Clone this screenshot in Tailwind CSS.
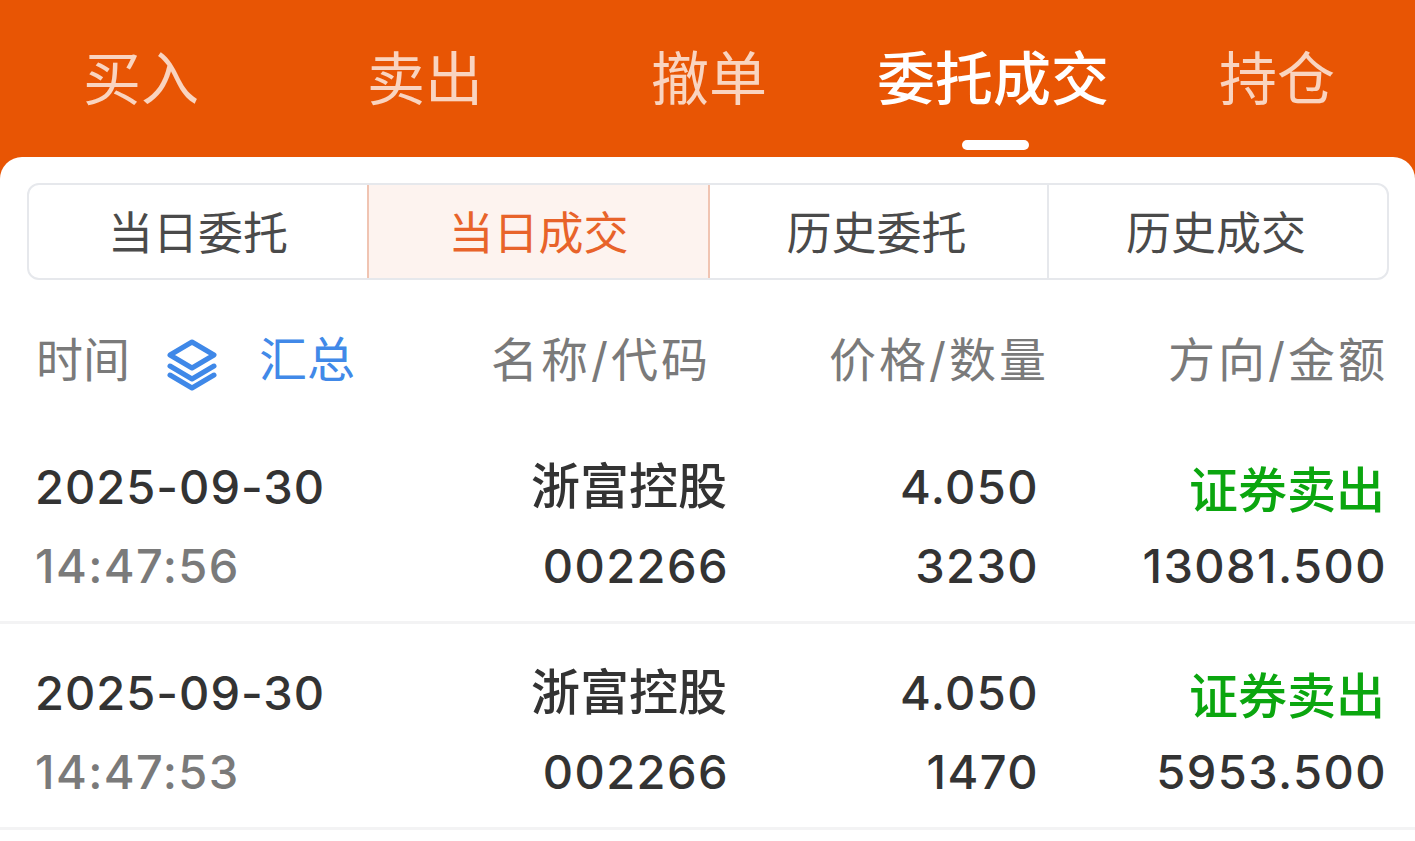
<!DOCTYPE html>
<html lang="zh-CN">
<head>
  <meta charset="UTF-8" />
  <title>委托成交</title>
  <script src="https://cdn.jsdelivr.net/npm/@tailwindcss/browser@4"></script>
</head>
<body class="bg-[#e85504] font-['Inter','Noto_Sans_CJK_SC',sans-serif] overflow-hidden h-[841px]">

  <!-- Top tabs -->
  <nav class="flex -ml-[1px] h-[157px] text-[58px] text-white/75">
    <div class="w-[284px] shrink-0 flex justify-center pt-[50px]"><span class="leading-[58px]">买入</span></div>
    <div class="w-[284px] shrink-0 flex justify-center pt-[50px]"><span class="leading-[58px]">卖出</span></div>
    <div class="w-[284px] shrink-0 flex justify-center pt-[50px]"><span class="leading-[58px]">撤单</span></div>
    <div class="w-[284px] shrink-0 flex flex-col items-center pt-[50px] text-white font-medium">
      <span class="leading-[58px] whitespace-nowrap">委托成交</span>
      <div class="w-[67px] h-[10px] mt-[32px] ml-[5px] rounded-full bg-white"></div>
    </div>
    <div class="w-[284px] shrink-0 flex justify-center pt-[50px]"><span class="leading-[58px]">持仓</span></div>
  </nav>

  <main class="bg-white rounded-t-[22px] h-[684px] pt-[26px]">

    <!-- Sub tabs -->
    <div class="mx-[27px] w-[1362px] h-[97px] flex border-2 border-[#e6e8ec] rounded-[12px] text-[45px] text-[#4a4a4a] overflow-hidden">
      <div class="w-[338px] flex items-center justify-center pt-[4px]">当日委托</div>
      <div class="w-[343px] flex items-center justify-center pt-[4px] bg-[#fdf3ef] text-[#e8632a] border-x-2 border-[#f0c4b2]">当日成交</div>
      <div class="w-[337px] flex items-center justify-center pt-[4px] pr-[4px]">历史委托</div>
      <div class="flex-1 flex items-center justify-center pt-[4px] pr-[4px] border-l-2 border-[#e6e8ec]">历史成交</div>
    </div>

    <!-- Column headers -->
    <div class="flex h-[136px] pt-[56px] pl-[36px] pr-[27px] text-[47px] leading-[48px] text-[#7a7a7a]">
      <div class="w-[404px] h-[48px] flex items-center">
        <span>时间</span>
        <svg class="ml-[36px] mt-[10px] w-[52px] h-[52px]" viewBox="0 0 52 52" fill="none" stroke="#3f88e8" stroke-width="5" stroke-linejoin="round" stroke-linecap="round">
          <path d="M26 3 L48 16 L26 29 L4 16 Z" />
          <path d="M4 27 L26 40 L48 27" />
          <path d="M4 36 L26 49 L48 36" />
        </svg>
        <span class="ml-[41px] text-[#4189e8] text-[48px]">汇总</span>
      </div>
      <div class="w-[271px] text-right whitespace-nowrap tracking-[3px]">名称/代码</div>
      <div class="w-[338px] text-right whitespace-nowrap tracking-[3px]">价格/数量</div>
      <div class="flex-1 text-right whitespace-nowrap tracking-[3px]">方向/金额</div>
    </div>

    <!-- Trades -->
    <div class="flex h-[208px] pt-[31px] pl-[35px] pr-[28px] border-b-[3px] border-[#f3f3f4] text-[47px] leading-[79px] text-[#333333] font-medium tracking-[1.4px]">
      <div class="w-[405px]">
        <div class="tracking-[1px]">2025-09-30</div>
        <div class="text-[#7a7a7a]">14:47:56</div>
      </div>
      <div class="w-[289px] text-right">
        <div class="text-[49px] pr-[2px] tracking-normal">浙富控股</div>
        <div>002266</div>
      </div>
      <div class="w-[310px] text-right">
        <div>4.050</div>
        <div>3230</div>
      </div>
      <div class="flex-1 text-right">
        <div class="h-[79px] pr-[2px] text-[49px] leading-[87px] tracking-normal text-[#0ba60f]">证券卖出</div>
        <div>13081.500</div>
      </div>
    </div>
    <div class="flex h-[206px] pt-[29px] pl-[35px] pr-[28px] border-b-[3px] border-[#f3f3f4] text-[47px] leading-[79px] text-[#333333] font-medium tracking-[1.4px]">
      <div class="w-[405px]">
        <div class="tracking-[1px]">2025-09-30</div>
        <div class="text-[#7a7a7a]">14:47:53</div>
      </div>
      <div class="w-[289px] text-right">
        <div class="text-[49px] pr-[2px] tracking-normal">浙富控股</div>
        <div>002266</div>
      </div>
      <div class="w-[310px] text-right">
        <div>4.050</div>
        <div>1470</div>
      </div>
      <div class="flex-1 text-right">
        <div class="h-[79px] pr-[2px] text-[49px] leading-[87px] tracking-normal text-[#0ba60f]">证券卖出</div>
        <div>5953.500</div>
      </div>
    </div>
  </main>

</body>
</html>
